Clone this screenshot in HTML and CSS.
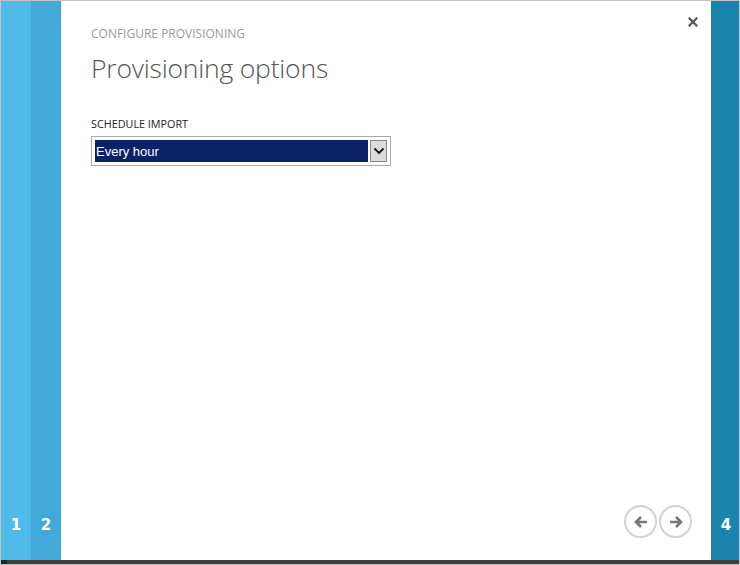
FILE: index.html
```html
<!DOCTYPE html>
<html>
<head>
<meta charset="utf-8">
<link rel="stylesheet" href="styles.css">
</head>
<body>
<div class="frame">
  <div class="cols">
    <div class="step step1"><span class="num">1</span></div>
    <div class="step step2"><span class="num">2</span></div>
    <div class="main">
      <div class="top">
        <div class="heading">
          <div class="kicker">CONFIGURE PROVISIONING</div>
          <h1 class="title">Provisioning options</h1>
        </div>
        <button class="close" aria-label="Close">
          <svg width="10" height="10" viewBox="0 0 10 10"><path d="M1.5 1.5 L8.5 8.5 M8.5 1.5 L1.5 8.5" stroke="#555" stroke-width="2.2" stroke-linecap="square"/></svg>
        </button>
      </div>
      <div class="field">
        <label class="label">SCHEDULE IMPORT</label>
        <div class="select">
          <div class="value">Every hour</div>
          <div class="drop">
            <svg width="12" height="8" viewBox="0 0 12 8"><path d="M1.5 1.5 L6 6 L10.5 1.5" fill="none" stroke="#111" stroke-width="1.8"/></svg>
          </div>
        </div>
      </div>
      <div class="nav">
        <button class="circle" aria-label="Back">
          <svg width="16" height="14" viewBox="0 0 16 14"><path d="M14 7 H3 M8 2 L3 7 L8 12" fill="none" stroke="#777" stroke-width="2.6"/></svg>
        </button>
        <button class="circle" aria-label="Next">
          <svg width="16" height="14" viewBox="0 0 16 14"><path d="M2 7 H13 M8 2 L13 7 L8 12" fill="none" stroke="#777" stroke-width="2.6"/></svg>
        </button>
      </div>
    </div>
    <div class="step step4"><span class="num num4">4</span></div>
  </div>
  <div class="bar"><span class="bar-end"></span></div>
</div>
</body>
</html>
```

FILE: styles.css
```css
html, body {
  margin: 0;
  padding: 0;
  background: #fff;
}
body {
  font-family: "Open Sans", "Segoe UI", "Liberation Sans", sans-serif;
}
.frame {
  width: 738px;
  height: 563px;
  border: 1px solid #c4c4c4;
  display: flex;
  flex-direction: column;
}
.cols {
  flex: 1;
  display: flex;
}
.step {
  display: flex;
  flex-direction: column;
  justify-content: flex-end;
  align-items: center;
  padding-bottom: 27px;
}
.step1 { width: 30px; background: #4fbbe9; }
.step2 { width: 30px; background: #41a8d8; }
.step4 { width: 28px; background: #1a83ae; }
.num {
  color: #fff;
  font-weight: 700;
  font-size: 15px;
  line-height: 16px;
  font-family: "DejaVu Sans", sans-serif;
}
.num4 {
  padding-left: 2px;
}
.main {
  width: 650px;
  background: #fff;
  display: flex;
  flex-direction: column;
  padding: 0 0 0 30px;
  box-sizing: border-box;
}
.top {
  display: flex;
  justify-content: space-between;
  align-items: flex-start;
}
.heading {
  padding-top: 25px;
}
.kicker {
  font-size: 12px;
  line-height: 16px;
  color: #9a9a9a;
}
.title {
  margin: 9px 0 0 0;
  font-weight: 300;
  font-size: 26.5px;
  line-height: 34px;
  color: #555;
  letter-spacing: -0.2px;
}
.close {
  margin: 14px 11px 0 0;
  width: 14px;
  height: 14px;
  padding: 0;
  border: 0;
  background: none;
  display: flex;
  align-items: center;
  justify-content: center;
}
.field {
  margin-top: 32px;
  display: flex;
  flex-direction: column;
}
.label {
  font-size: 10.8px;
  line-height: 14px;
  color: #222;
}
.select {
  margin-top: 5px;
  width: 300px;
  height: 30px;
  box-sizing: border-box;
  border: 1px solid #aaa;
  padding: 3px;
  display: flex;
  gap: 2px;
}
.value {
  flex: 1;
  background: #0b2266;
  color: #fff;
  font-size: 13px;
  line-height: 23px;
  padding-left: 1px;
  font-family: "Liberation Sans", "Open Sans", sans-serif;
}
.drop {
  width: 17px;
  background: #dcdcdc;
  border: 1px solid #888;
  box-sizing: border-box;
  display: flex;
  align-items: center;
  justify-content: center;
}
.nav {
  margin-top: auto;
  align-self: flex-end;
  display: flex;
  gap: 2px;
  margin-right: 19px;
  margin-bottom: 22px;
}
.circle {
  width: 33px;
  height: 33px;
  border-radius: 50%;
  border: 2px solid #d2d2d2;
  background: #fff;
  padding: 0;
  display: flex;
  align-items: center;
  justify-content: center;
}
.bar {
  height: 4px;
  background: #3d3d3d;
  display: flex;
}
.bar-end {
  width: 6px;
  background: #0f2b36;
}
```
